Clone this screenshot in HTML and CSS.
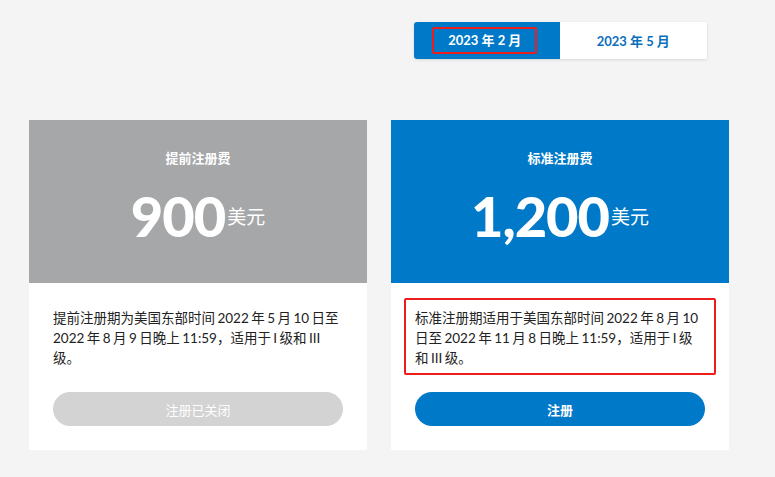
FILE: index.html
```html
<!DOCTYPE html>
<html lang="zh-CN">
<head>
    <meta charset="UTF-8">
    <meta name="viewport" content="width=device-width, initial-scale=1.0">
    <title>注册费</title>
    <link rel="stylesheet" href="styles.css">
</head>
<body>
    <div class="pricing">
        <div class="tabs">
            <button class="tab active"><span class="mark">2023 年 2 月</span></button>
            <button class="tab">2023 年 5 月</button>
        </div>

        <div class="card">
            <div class="card-head grey">
                <h2>提前注册费</h2>
                <div class="price">900<span class="unit">美元</span></div>
            </div>
            <div class="card-body">
                <p class="desc">提前注册期为美国东部时间 2022 年 5 月 10 日至 2022 年 8 月 9 日晚上 11:59，适用于 I 级和 III 级。</p>
                <button class="register closed">注册已关闭</button>
            </div>
        </div>

        <div class="card">
            <div class="card-head blue">
                <h2>标准注册费</h2>
                <div class="price">1,200<span class="unit">美元</span></div>
            </div>
            <div class="card-body">
                <div class="highlight">
                    <p class="desc">标准注册期适用于美国东部时间 2022 年 8 月 10 日至 2022 年 11 月 8 日晚上 11:59，适用于 I 级<br>和 III 级。</p>
                </div>
                <button class="register open">注册</button>
            </div>
        </div>
    </div>
</body>
</html>
```

FILE: styles.css
```css
body {
    margin: 0;
    background-color: #f4f4f4;
    font-family: Lato, "Noto Sans CJK SC", sans-serif;
    color: #222;
}
.pricing {
    display: grid;
    grid-template-columns: 338px 338px;
    column-gap: 24px;
    padding: 22px 0 0 29px;
}
.tabs {
    grid-column: 2;
    justify-self: center;
    display: flex;
    width: 293px;
    height: 37px;
    margin-bottom: 61px;
    background: white;
    border-radius: 3px;
    box-shadow: 0 1px 3px rgba(0,0,0,0.12);
    overflow: hidden;
}
.tab {
    flex: 1;
    border: none;
    background: white;
    color: #0b6fbd;
    font-family: inherit;
    font-size: 13px;
    font-weight: bold;
    cursor: pointer;
    padding: 0;
}
.tab.active {
    background-color: #0079c8;
    color: white;
}
.mark {
    display: inline-block;
    line-height: 17px;
    padding: 3px 14px;
    margin-left: -4px;
    border: 2px solid #ee1d1d;
    border-radius: 2px;
}
.card {
    grid-row: 2;
    background: white;
}
.card-head {
    height: 163px;
    box-sizing: border-box;
    padding-top: 28px;
    text-align: center;
    color: white;
}
.card-head.grey {
    background-color: #a6a7a9;
}
.card-head.blue {
    background-color: #0079c8;
}
.card-head h2 {
    margin: 0;
    font-size: 13px;
    line-height: 20px;
    font-weight: bold;
}
.price {
    margin-top: 18px;
    font-size: 56px;
    line-height: 60px;
    font-weight: 900;
    letter-spacing: -1px;
}
.unit {
    font-size: 19px;
    font-weight: normal;
    letter-spacing: 0;
    vertical-align: 13px;
    margin-left: 2px;
}
.card-body {
    padding: 25px 24px 24px;
}
.desc {
    margin: 0;
    font-size: 13.5px;
    line-height: 20px;
    word-spacing: -1px;
}
.highlight {
    margin: -10px -11px -7px;
    padding: 8px 9px 5px;
    border: 2px solid #ee1d1d;
    border-radius: 2px;
}
.register {
    display: block;
    width: 100%;
    height: 34px;
    margin-top: 24px;
    border: none;
    border-radius: 17px;
    color: white;
    font-family: inherit;
    font-size: 13px;
    cursor: pointer;
}
.register.closed {
    background-color: #d3d3d3;
    cursor: default;
}
.register.open {
    background-color: #0079c8;
    font-weight: bold;
}
```
